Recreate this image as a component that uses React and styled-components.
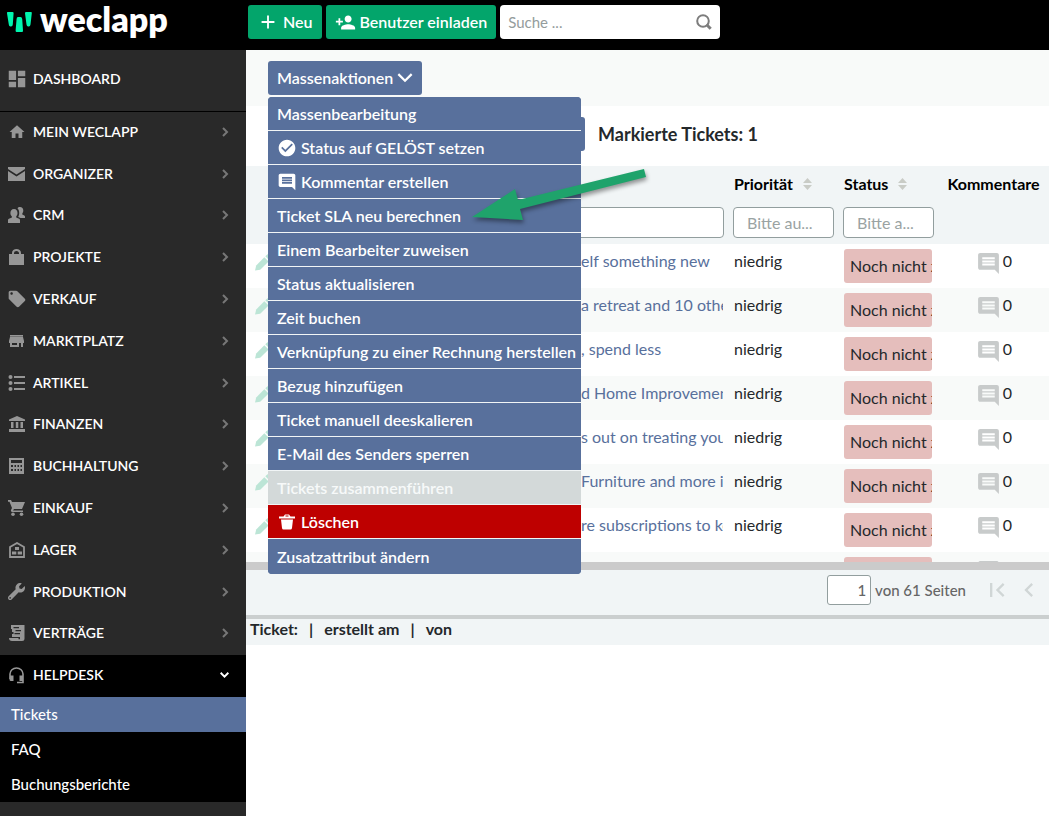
import React, { useState } from 'react';
import styled, { createGlobalStyle, css } from 'styled-components';
import {
  MdDashboard, MdHome, MdLocalOffer, MdCheckCircle, MdComment,
  MdPersonAdd, MdFirstPage, MdChevronLeft, MdAdd,
} from 'react-icons/md';
import { FaWrench } from 'react-icons/fa';

const GlobalStyle = createGlobalStyle`
  *, *::before, *::after { box-sizing: border-box; }
  body {
    margin: 0;
    background: #fff;
    color: #24282b;
    font-family: Lato, "Liberation Sans", sans-serif;
    font-size: 16px;
    line-height: 20px;
  }
  button, input { font: inherit; }
  a { color: inherit; text-decoration: none; }
  ul { list-style: none; margin: 0; padding: 0; }
`;

// --- Layout ---
const Page = styled.div`
  display: flex;
  flex-direction: column;
  min-height: 100vh;
`;

const TopBar = styled.header`
  display: flex;
  height: 50px;
  padding: 5px 0 0 6px;
  background: #000;
`;

const Body = styled.div`
  display: flex;
  flex: 1;
`;

const Sidebar = styled.nav`
  width: 246px;
  flex-shrink: 0;
  background: #292929;
  color: #fff;
`;

const Main = styled.main`
  flex: 1;
  min-width: 0;
`;

// --- Top bar ---
const Brand = styled.a`
  display: flex;
  width: 242px;
  gap: 8px;
  color: #fff;
  font-size: 34px;
  font-weight: 800;
  line-height: 28px;

  svg { margin-top: 6px; }
`;

const TopActions = styled.div`
  display: flex;
  align-items: flex-start;
  gap: 4px;
`;

const ActionButton = styled.button`
  display: flex;
  align-items: center;
  gap: 4px;
  height: 34px;
  padding: 0 9px;
  border: 0;
  border-radius: 3px;
  background: ${({ $blue }) => ($blue ? '#58709c' : '#03a56b')};
  color: #fff;
  font-weight: 600;
  white-space: nowrap;
`;

const SearchBox = styled.label`
  display: flex;
  align-items: center;
  width: 220px;
  height: 34px;
  padding: 0 8px;
  border-radius: 4px;
  background: #fff;

  input {
    flex: 1;
    min-width: 0;
    padding: 0;
    border: 0;
    outline: 0;
    background: none;
    font-size: 15px;
  }
  input::placeholder { color: #949c9c; opacity: 1; }
`;

// --- Sidebar ---
const navRow = css`
  display: flex;
  align-items: center;
  width: 100%;
  font-size: 14px;
  font-weight: 600;
`;

const DashboardLink = styled.a`
  ${navRow}
  height: 62px;
  padding: 0 18px 4px 5px;
  border-bottom: 1px solid #000;
`;

const NavList = styled.ul`
  display: grid;
  grid-auto-rows: 1fr;
  min-height: 585px;
`;

const NavLink = styled.a`
  ${navRow}
  height: 100%;
  padding: 0 17px 2px 5px;
  background: ${({ $open }) => ($open ? '#000' : 'transparent')};
`;

const NavIcon = styled.span`
  display: flex;
  justify-content: center;
  width: 23px;
  margin-right: 5px;
  color: #969696;
`;

const NavText = styled.span`
  flex: 1;
`;

const SubList = styled.ul`
  background: #000;
`;

const SubLink = styled.a`
  display: block;
  padding: 0 11px;
  background: ${({ $active }) => ($active ? '#58709c' : 'transparent')};
  font-size: 15px;
  font-weight: 500;
  line-height: 35px;
`;

// --- Mass actions ---
const ActionBar = styled.div`
  height: 56px;
  padding: 11px 22px;
  background: #f8faf9;
`;

const MenuAnchor = styled.div`
  position: relative;
  width: fit-content;
`;

const Menu = styled.ul`
  position: absolute;
  z-index: 2;
  top: 36px;
  left: 0;
  width: 313px;
  overflow: hidden;
  border-radius: 4px;
  background: #58709c;
`;

const menuTone = {
  normal: ['#58709c', '#fff'],
  disabled: ['#d3d9d9', '#f7f9f9'],
  danger: ['#be0000', '#fff'],
};

const MenuItem = styled.button`
  display: flex;
  align-items: center;
  gap: 4px;
  width: 100%;
  height: 34px;
  padding: 0 9px;
  border: 0;
  border-bottom: 1px solid #f1f5f6;
  background: ${({ $tone }) => menuTone[$tone][0]};
  color: ${({ $tone }) => menuTone[$tone][1]};
  font-weight: 600;
  text-align: left;
  white-space: nowrap;

  li:last-child > & { height: 35px; border-bottom: 0; }
`;

const Pointer = styled.svg`
  position: absolute;
  z-index: 3;
  top: 106px;
  left: 202px;
  pointer-events: none;
  filter: drop-shadow(1px 3px 2px rgba(0, 0, 0, 0.4));
`;

const Selection = styled.div`
  display: flex;
  align-items: center;
  gap: 13px;
  height: 60px;
  padding: 0 22px 4px;
`;

const SelectionButton = styled(ActionButton)`
  width: 317px;
`;

const SelectionTitle = styled.h1`
  margin: 0;
  font-size: 18px;
  font-weight: 700;
`;

// --- Ticket table ---
const TableArea = styled.div`
  height: 404px;
  overflow: hidden;
  border-bottom: 8px solid #cbcbcb;
`;

const Table = styled.table`
  width: 100%;
  border-collapse: collapse;
  table-layout: fixed;

  thead { background: #f1f5f6; }
  tbody tr:nth-child(even) { background: #f8faf9; }
`;

const Col = styled.col`
  width: ${({ $width }) => $width};
`;

const HeadCell = styled.th`
  height: 36px;
  padding: 0 6px;
  color: #000;
  font-weight: 700;
  text-align: ${({ $center }) => ($center ? 'center' : 'left')};
  white-space: nowrap;

  svg { margin-left: 6px; }
`;

const FilterCell = styled.td`
  height: 42px;
  padding: 5px 4px 6px 5px;
`;

const FilterInput = styled.input`
  display: block;
  width: 100%;
  height: 31px;
  padding: 0 13px;
  border: 1px solid #929e9e;
  border-radius: 4px;
  background: #fff;

  &::placeholder { color: #9aa3a3; opacity: 1; }
`;

const Cell = styled.td`
  height: 44px;
  padding: ${({ $tight }) => ($tight ? '5px 6px' : '7px 5px 7px 6px')};
  overflow: hidden;
  vertical-align: top;
  white-space: nowrap;
`;

const EditButton = styled.button`
  display: flex;
  padding: 3px;
  border: 0;
  background: none;
  color: #bce5d6;
`;

const Subject = styled.a`
  display: block;
  overflow: hidden;
  color: #58709c;
`;

const Badge = styled.span`
  display: block;
  padding-left: 6px;
  overflow: hidden;
  border-radius: 3px;
  background: #e5bebc;
  line-height: 34px;
`;

const Comments = styled.span`
  display: flex;
  justify-content: center;
  gap: 2px;
  height: 20px;

  svg {
    flex-shrink: 0;
    color: #c8cbcb;
  }
`;

// --- Footer ---
const Pager = styled.div`
  display: flex;
  align-items: center;
  justify-content: flex-end;
  height: 49px;
  padding: 0 6px 5px;
  border-bottom: 4px solid #cbcfcf;
  background: #f1f5f6;
  color: #666;
  font-size: 15px;
  font-weight: 500;
  white-space: nowrap;
`;

const PageInput = styled.input`
  width: 44px;
  height: 30px;
  margin-right: 4px;
  padding: 0 4px;
  border: 1px solid #929e9e;
  border-radius: 3px;
  background: #fff;
  color: #666;
  text-align: right;
`;

const PageButton = styled.button`
  display: flex;
  margin-left: ${({ $first }) => ($first ? '17px' : '4px')};
  padding: 0;
  border: 0;
  background: none;
  color: #d0d6d6;
`;

const Details = styled.div`
  display: flex;
  gap: 11px;
  height: 26px;
  padding: 0 4px;
  background: #f1f5f6;
  font-weight: 700;
`;

// --- Drawn icons ---
const LogoMark = () => (
  <svg width="26" height="22" viewBox="0 0 26 22" fill="#00f5ae" aria-hidden="true">
    <path d="M1.500 1h5q1.200 0 1.100 1.200L6.800 13.500q-.2 2-1.700 2h-.6q-1.500 0-1.700-2L1 2.200Q1 1 1.500 1z" />
    <path d="M12 6h2.500q1.500 0 1.700 2L17 19.500q.1 1.500-1 1.500h-5.300q-1.200 0-1.100-1.500l1-11.500q.1-2 1.400-2z" />
    <path d="M20 1h5q1 0 .8 1.200l-1.300 11.300q-.2 2-1.700 2h-.6q-1.500 0-1.700-2L19 2.200Q19 1 20 1z" />
  </svg>
);

const SearchIcon = () => (
  <svg width="16" height="16" viewBox="0 0 16 16" fill="none" stroke="#7d7d7d" aria-hidden="true">
    <circle cx="7" cy="7" r="5.800" strokeWidth="2" />
    <path d="M10.500 10.500l4.200 4.200" strokeWidth="3" />
  </svg>
);

const ChevronDown = ({ width, height, stroke }) => (
  <svg width={width} height={height} viewBox="0 0 14 9" fill="none" stroke="currentColor" strokeWidth={stroke} aria-hidden="true">
    <path d="M1 1l6 6 6-6" />
  </svg>
);

const ChevronRight = () => (
  <svg width="8" height="10" viewBox="0 0 8 10" fill="none" stroke="#777" strokeWidth="2" aria-hidden="true">
    <path d="M2 1l4 4-4 4" />
  </svg>
);

const SortIcon = () => (
  <svg width="9" height="12" viewBox="0 0 9 12" fill="#c9ccc6" aria-hidden="true">
    <path d="M4.500 0L9 5H0zM4.500 12L9 7H0z" />
  </svg>
);

const PencilIcon = () => (
  <svg width="17" height="17" viewBox="0 0 17 17" fill="currentColor" aria-hidden="true">
    <path d="M0 16.500l1.200-5L9.300 3.200l4.300 4.300L5.200 15.800z" />
    <path d="M10.300 2.300L12.200.6q1-1 2 0l2 2q1 1 0 2l-1.700 1.900z" />
  </svg>
);

const MailIcon = () => (
  <svg width="17" height="14" viewBox="0 0 17 14" fill="currentColor" aria-hidden="true">
    <path d="M0 0h17v2L8.500 7.500 0 2z" />
    <path d="M0 4l8.500 5.500L17 4v10H0z" />
  </svg>
);

const PeopleIcon = () => (
  <svg width="17" height="16" viewBox="0 0 17 16" fill="currentColor" aria-hidden="true">
    <path d="M6 2c2.400 0 3.500 1.800 3.500 4 0 1.700-.6 2.700-1.300 3.400v1.100l3 1.300c.6.300.8.800.8 1.500V16H0v-2.700c0-.7.300-1.200.9-1.500l3-1.300V9.400C3 8.700 2.400 7.700 2.400 6c0-2.200 1.200-4 3.600-4z" />
    <path d="M9.500 1.200C10 .5 10.800 0 12 0c2 0 3.300 1.500 3.300 3.500 0 1.600-.6 2.400-1 3v1l2 .9c.5.200.7.700.7 1.200V11h-4.500l-2.300-1c.500-.9 1-2.200 1-4 0-2.100-.6-3.800-1.700-4.800z" />
  </svg>
);

const BagIcon = () => (
  <svg width="15" height="16" viewBox="0 0 15 16" fill="currentColor" aria-hidden="true">
    <path d="M0 5h15v11H0z" />
    <path d="M4 6V4a3.500 3 0 0 1 7 0v2" fill="none" stroke="currentColor" strokeWidth="2" />
  </svg>
);

const StoreIcon = () => (
  <svg width="15" height="12" viewBox="0 0 15 12" fill="currentColor" aria-hidden="true">
    <path fillRule="evenodd" d="M1 0h13v2l1 4v2h-1v4h-2V8h-2v4H1V8H0V6l1-4zM3 8v2h5V8z" />
    <path d="M1 1.200h13v.6H1z" fill="#5c5c5c" />
  </svg>
);

const ListIcon = () => (
  <svg width="17" height="16" viewBox="0 0 17 16" fill="currentColor" aria-hidden="true">
    <circle cx="2.500" cy="2" r="2" />
    <circle cx="2.500" cy="8" r="2" />
    <circle cx="2.500" cy="14" r="2" />
    <path d="M6 1h11v2H6zM6 7h11v2H6zM6 13h11v2H6z" />
  </svg>
);

const BankIcon = () => (
  <svg width="16" height="16" viewBox="0 0 16 16" fill="currentColor" aria-hidden="true">
    <path d="M8 0l8 3.500V5H0V3.500zM2 6h2.500v6H2zM6.800 6h2.500v6H6.800zM11.500 6H14v6h-2.500zM0 13h16v3H0z" />
  </svg>
);

const CalculatorIcon = () => (
  <svg width="15" height="16" viewBox="0 0 15 16" fill="currentColor" aria-hidden="true">
    <path fillRule="evenodd" d="M0 0h15v16H0zM2 2v3h11V2zM2 7v2h2V7zm3.500 0v2h1.500V7zm3 0v2H10V7zm3 0v2H13V7zM2 11v2h2v-2zm3.500 0v2h1.500v-2zm3 0v2H10v-2zm3 0v2H13v-2z" />
  </svg>
);

const CartIcon = () => (
  <svg width="17" height="16" viewBox="0 0 17 16" fill="currentColor" aria-hidden="true">
    <path d="M0 0h3l1 2h13l-3 7H6l-1 1.500h10V12H4.500Q2.500 12 3 10l1-2-2.500-6.300H0z" />
    <circle cx="5" cy="14.200" r="1.800" />
    <circle cx="13.500" cy="14.200" r="1.800" />
  </svg>
);

const WarehouseIcon = () => (
  <svg width="16" height="16" viewBox="0 0 16 16" fill="currentColor" aria-hidden="true">
    <path d="M1 15V5l7-4 7 4v10z" fill="none" stroke="currentColor" strokeWidth="1.800" />
    <path d="M6 5h4v3H6zM3 9.500h4.300v3H3zM8.700 9.500H13v3H8.700z" />
  </svg>
);

const ContractIcon = () => (
  <svg width="16" height="16" viewBox="0 0 16 16" fill="currentColor" aria-hidden="true">
    <path fillRule="evenodd" d="M2 0h13.500v13.500A2.500 2.500 0 0 1 13 16H3a3 3 0 0 1-3-3h9.500v1.200H11V12H3V9h1.500V7H3V4H2zM4.500 2v1.200H10V2zm2 3v1.200H12V5zm-1 3v1.200H11V8z" />
  </svg>
);

const HeadsetIcon = () => (
  <svg width="15" height="17" viewBox="0 0 15 17" fill="currentColor" aria-hidden="true">
    <path d="M1 12V7a6.500 6 0 0 1 13 0v8.500H8" fill="none" stroke="currentColor" strokeWidth="1.600" />
    <path d="M1 8.500h3.500V14H2q-1.500 0-1.500-1.500zM10.500 8.500H14V14h-3.500z" />
  </svg>
);

const TrashIcon = () => (
  <svg width="20" height="16" viewBox="0 0 20 16" fill="currentColor" aria-hidden="true">
    <path d="M2 2.500h4.500L8 .5h4l1.500 2H18v2H2zM4 5.500h12L15 14q-.2 1.500-1.500 1.500h-7Q5.200 15.500 5 14z" />
    <path d="M8.500 1.500h3v1h-3z" fill="#be0000" />
  </svg>
);

// --- Data ---
const modules = [
  { label: 'MEIN WECLAPP', icon: <MdHome size={18} /> },
  { label: 'ORGANIZER', icon: <MailIcon /> },
  { label: 'CRM', icon: <PeopleIcon /> },
  { label: 'PROJEKTE', icon: <BagIcon /> },
  { label: 'VERKAUF', icon: <MdLocalOffer size={20} /> },
  { label: 'MARKTPLATZ', icon: <StoreIcon /> },
  { label: 'ARTIKEL', icon: <ListIcon /> },
  { label: 'FINANZEN', icon: <BankIcon /> },
  { label: 'BUCHHALTUNG', icon: <CalculatorIcon /> },
  { label: 'EINKAUF', icon: <CartIcon /> },
  { label: 'LAGER', icon: <WarehouseIcon /> },
  { label: 'PRODUKTION', icon: <FaWrench size={17} /> },
  { label: 'VERTRÄGE', icon: <ContractIcon /> },
  { label: 'HELPDESK', icon: <HeadsetIcon />, open: true },
];

const helpdeskPages = ['Tickets', 'FAQ', 'Buchungsberichte'];

const massActions = [
  { label: 'Massenbearbeitung' },
  { label: 'Status auf GELÖST setzen', icon: <MdCheckCircle size={20} /> },
  { label: 'Kommentar erstellen', icon: <MdComment size={20} /> },
  { label: 'Ticket SLA neu berechnen' },
  { label: 'Einem Bearbeiter zuweisen' },
  { label: 'Status aktualisieren' },
  { label: 'Zeit buchen' },
  { label: 'Verknüpfung zu einer Rechnung herstellen' },
  { label: 'Bezug hinzufügen' },
  { label: 'Ticket manuell deeskalieren' },
  { label: 'E-Mail des Senders sperren' },
  { label: 'Tickets zusammenführen', tone: 'disabled' },
  { label: 'Löschen', icon: <TrashIcon />, tone: 'danger' },
  { label: 'Zusatzattribut ändern' },
];

const tickets = [
  'elf something new',
  'a retreat and 10 othe',
  ', spend less',
  'd Home Improvement',
  's out on treating your',
  'Furniture and more id',
  're subscriptions to ke',
  '',
];

function App() {
  const [menuOpen, setMenuOpen] = useState(true);
  const [page, setPage] = useState('1');

  return (
    <Page>
      <GlobalStyle />
      <TopBar>
        <Brand href="#">
          <LogoMark />
          weclapp
        </Brand>
        <TopActions>
          <ActionButton><MdAdd size={22} />Neu</ActionButton>
          <ActionButton><MdPersonAdd size={21} />Benutzer einladen</ActionButton>
          <SearchBox>
            <input type="text" placeholder="Suche ..." aria-label="Suche" />
            <SearchIcon />
          </SearchBox>
        </TopActions>
      </TopBar>

      <Body>
        <Sidebar>
          <DashboardLink href="#">
            <NavIcon><MdDashboard size={22} /></NavIcon>
            <NavText>DASHBOARD</NavText>
          </DashboardLink>
          <NavList>
            {modules.map((item) => (
              <li key={item.label}>
                <NavLink href="#" $open={item.open}>
                  <NavIcon>{item.icon}</NavIcon>
                  <NavText>{item.label}</NavText>
                  {item.open ? <ChevronDown width={9} height={6} stroke={3} /> : <ChevronRight />}
                </NavLink>
              </li>
            ))}
          </NavList>
          <SubList>
            {helpdeskPages.map((label, i) => (
              <li key={label}>
                <SubLink href="#" $active={i === 0}>{label}</SubLink>
              </li>
            ))}
          </SubList>
        </Sidebar>

        <Main>
          <ActionBar>
            <MenuAnchor>
              <ActionButton $blue aria-expanded={menuOpen} onClick={() => setMenuOpen(!menuOpen)}>
                Massenaktionen
                <ChevronDown width={16} height={10} stroke={2} />
              </ActionButton>
              {menuOpen && (
                <Menu>
                  {massActions.map(({ label, icon, tone = 'normal' }) => (
                    <li key={label}>
                      <MenuItem $tone={tone} disabled={tone === 'disabled'}>
                        {icon}
                        {label}
                      </MenuItem>
                    </li>
                  ))}
                </Menu>
              )}
              <Pointer width="180" height="56" viewBox="0 0 180 56" fill="#1fa36b" aria-hidden="true">
                <path d="M2 50L45 22l3 11L174 2l2 8L50 42l3 11z" />
              </Pointer>
            </MenuAnchor>
          </ActionBar>

          <Selection>
            <SelectionButton $blue aria-label="Auswahl" />
            <SelectionTitle>Markierte Tickets: 1</SelectionTitle>
          </Selection>

          <TableArea>
            <Table>
              <colgroup>
                <Col $width="35px" />
                <Col $width="294px" />
                <Col $width="auto" />
                <Col $width="110px" />
                <Col $width="100px" />
                <Col $width="111px" />
              </colgroup>
              <thead>
                <tr>
                  <HeadCell />
                  <HeadCell />
                  <HeadCell />
                  <HeadCell>Priorität <SortIcon /></HeadCell>
                  <HeadCell>Status <SortIcon /></HeadCell>
                  <HeadCell $center>Kommentare</HeadCell>
                </tr>
                <tr>
                  <FilterCell />
                  <FilterCell colSpan={2}><FilterInput aria-label="Betreff" /></FilterCell>
                  <FilterCell><FilterInput placeholder="Bitte au..." aria-label="Priorität" /></FilterCell>
                  <FilterCell><FilterInput placeholder="Bitte a..." aria-label="Status" /></FilterCell>
                  <FilterCell />
                </tr>
              </thead>
              <tbody>
                {tickets.map((subject, i) => (
                  <tr key={i}>
                    <Cell><EditButton aria-label="Bearbeiten"><PencilIcon /></EditButton></Cell>
                    <Cell />
                    <Cell><Subject href="#">{subject}</Subject></Cell>
                    <Cell>niedrig</Cell>
                    <Cell $tight><Badge>Noch nicht z</Badge></Cell>
                    <Cell><Comments><MdComment size={25} />0</Comments></Cell>
                  </tr>
                ))}
              </tbody>
            </Table>
          </TableArea>

          <Pager>
            <PageInput value={page} onChange={(e) => setPage(e.target.value)} aria-label="Seite" />
            von 61 Seiten
            <PageButton $first aria-label="Erste Seite"><MdFirstPage size={28} /></PageButton>
            <PageButton aria-label="Vorherige Seite"><MdChevronLeft size={28} /></PageButton>
          </Pager>
          <Details>
            <span>Ticket:</span>
            <span>|</span>
            <span>erstellt am</span>
            <span>|</span>
            <span>von</span>
          </Details>
        </Main>
      </Body>
    </Page>
  );
}

export default App;
